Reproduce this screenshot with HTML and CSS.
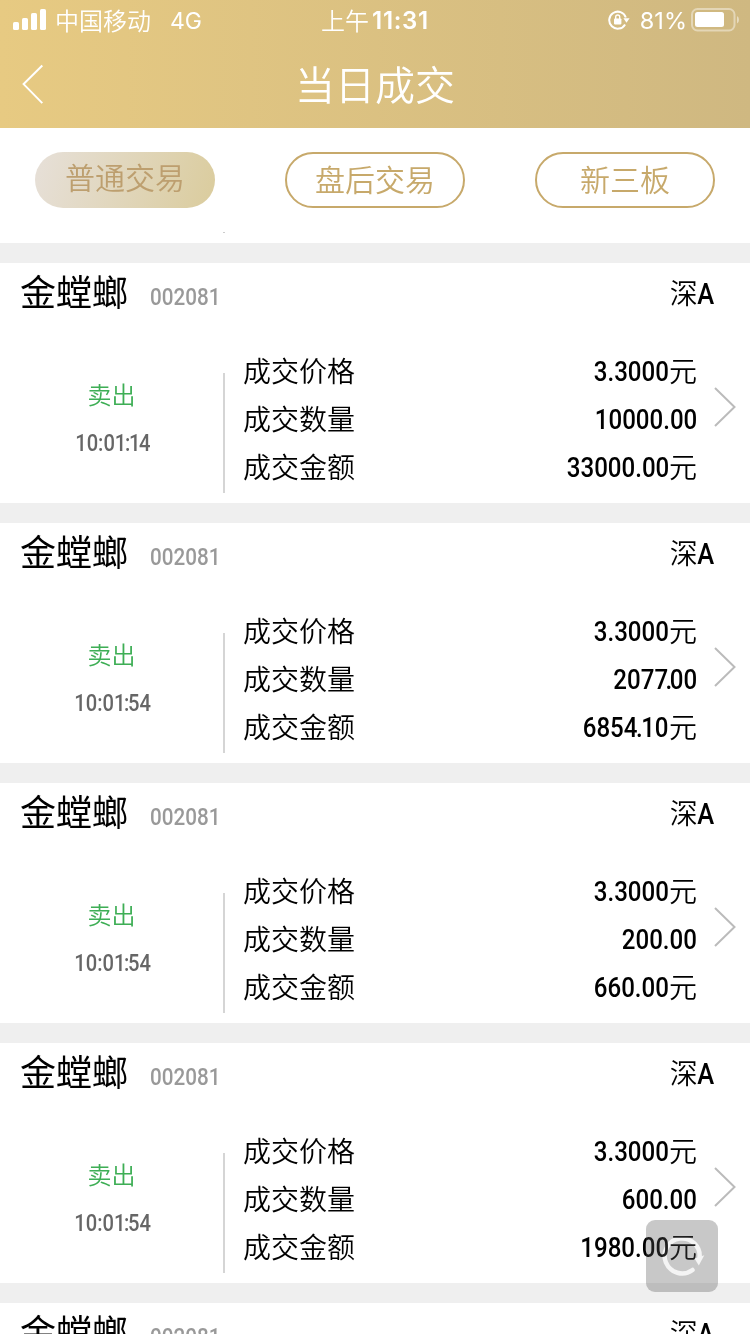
FILE: index.html
```html
<!DOCTYPE html>
<html lang="zh-CN">
<head>
<meta charset="utf-8">
<title>当日成交</title>
<link rel="stylesheet" href="styles.css">
</head>
<body>
<div class="screen">
  <header class="header">
    <div class="status">
      <div class="status-left">
        <svg class="signal" width="34" height="21" viewBox="0 0 34 21" fill="#fff"><rect x="0" y="13" width="6" height="8" rx="1.6"/><rect x="9" y="9" width="6" height="12" rx="1.6"/><rect x="18" y="4" width="6" height="17" rx="1.6"/><rect x="27" y="0" width="6" height="21" rx="1.6"/></svg>
        <span class="carrier">中国移动</span><span class="network">4G</span>
      </div>
      <div class="clock"><span class="ampm">上午</span><span class="time">11:31</span></div>
      <div class="status-right">
        <svg class="lock" width="22" height="20" viewBox="0 0 22 20"><path d="M17.1 14.4A8.5 8.5 0 1 1 17.8 7.5" fill="none" stroke="#fff" stroke-width="2"/><path d="M15.400 8.200h6.200l-3.100 4.600z" fill="#fff"/><rect x="6" y="8.400" width="7.400" height="6" rx=".8" fill="#fff"/><path d="M7.700 9V7a2 2 0 0 1 4 0v2" fill="none" stroke="#fff" stroke-width="1.4"/></svg>
        <span class="percent">81%</span>
        <svg class="battery" width="49" height="24" viewBox="0 0 49 24"><rect x="1" y="1" width="42.5" height="21.5" rx="5.5" fill="none" stroke="#fff" stroke-opacity=".42" stroke-width="2"/><rect x="4" y="4" width="29" height="15" rx="2.5" fill="#fff"/><path d="M46 8q2 1 2 3.800t-2 3.800z" fill="#fff" fill-opacity=".5"/></svg>
      </div>
    </div>
    <div class="navbar">
      <svg class="back" width="22" height="40" viewBox="0 0 22 40"><path d="M20.300 1.500L1.600 20.100l18.700 19" fill="none" stroke="#fff" stroke-width="2"/></svg>
      <h1 class="title">当日成交</h1>
    </div>
  </header>
  <nav class="tabs">
    <span class="tab active">普通交易</span>
    <span class="tab">盘后交易</span>
    <span class="tab">新三板</span>
    <i class="speck"></i>
  </nav>
  <main class="list">
    <section class="card">
      <div class="card-head"><span class="name">金螳螂</span><span class="code">002081</span><span class="market">深<b>A</b></span></div>
      <div class="card-body">
        <div class="side"><span class="action">卖出</span><span class="stamp">10:0<i class="tight">1:1</i>4</span></div>
        <div class="rows">
          <div class="row"><span>成交价格</span><span class="value"><b>3.3000</b>元</span></div>
          <div class="row"><span>成交数量</span><span class="value"><b>10000.00</b></span></div>
          <div class="row"><span>成交金额</span><span class="value"><b>33000.00</b>元</span></div>
        </div>
        <svg class="more" width="22" height="40" viewBox="0 0 22 40"><path d="M1 1l19.500 19L1 39" fill="none" stroke="#bbb" stroke-width="2"/></svg>
      </div>
    </section>
    <section class="card">
      <div class="card-head"><span class="name">金螳螂</span><span class="code">002081</span><span class="market">深<b>A</b></span></div>
      <div class="card-body">
        <div class="side"><span class="action">卖出</span><span class="stamp">10:0<i class="tight">1:</i>54</span></div>
        <div class="rows">
          <div class="row"><span>成交价格</span><span class="value"><b>3.3000</b>元</span></div>
          <div class="row"><span>成交数量</span><span class="value"><b>207<i class="kern">7.</i>00</b></span></div>
          <div class="row"><span>成交金额</span><span class="value"><b>685<i class="kern-s">4.</i>10</b>元</span></div>
        </div>
        <svg class="more" width="22" height="40" viewBox="0 0 22 40"><path d="M1 1l19.500 19L1 39" fill="none" stroke="#bbb" stroke-width="2"/></svg>
      </div>
    </section>
    <section class="card">
      <div class="card-head"><span class="name">金螳螂</span><span class="code">002081</span><span class="market">深<b>A</b></span></div>
      <div class="card-body">
        <div class="side"><span class="action">卖出</span><span class="stamp">10:0<i class="tight">1:</i>54</span></div>
        <div class="rows">
          <div class="row"><span>成交价格</span><span class="value"><b>3.3000</b>元</span></div>
          <div class="row"><span>成交数量</span><span class="value"><b>200.00</b></span></div>
          <div class="row"><span>成交金额</span><span class="value"><b>660.00</b>元</span></div>
        </div>
        <svg class="more" width="22" height="40" viewBox="0 0 22 40"><path d="M1 1l19.500 19L1 39" fill="none" stroke="#bbb" stroke-width="2"/></svg>
      </div>
    </section>
    <section class="card">
      <div class="card-head"><span class="name">金螳螂</span><span class="code">002081</span><span class="market">深<b>A</b></span></div>
      <div class="card-body">
        <div class="side"><span class="action">卖出</span><span class="stamp">10:0<i class="tight">1:</i>54</span></div>
        <div class="rows">
          <div class="row"><span>成交价格</span><span class="value"><b>3.3000</b>元</span></div>
          <div class="row"><span>成交数量</span><span class="value"><b>600.00</b></span></div>
          <div class="row"><span>成交金额</span><span class="value"><b>1980.00</b>元</span></div>
        </div>
        <svg class="more" width="22" height="40" viewBox="0 0 22 40"><path d="M1 1l19.500 19L1 39" fill="none" stroke="#bbb" stroke-width="2"/></svg>
      </div>
    </section>
    <section class="card">
      <div class="card-head"><span class="name">金螳螂</span><span class="code">002081</span><span class="market">深<b>A</b></span></div>
    </section>
  </main>
  <div class="refresh">
    <svg width="72" height="72" viewBox="0 0 72 72"><path d="M53.500 38A17.500 17.500 0 1 0 46.500 50" fill="none" stroke="#2e2e2e" stroke-width="4.500" stroke-linecap="round"/><path d="M48.500 38.500l9.800-3.200-5.500 10.200z" fill="#2e2e2e"/></svg>
  </div>
</div>
</body>
</html>
```

FILE: styles.css
```css
* { box-sizing: border-box; }
body {
  margin: 0;
  font-family: "Noto Sans CJK SC", sans-serif;
  background: #efefef;
  color: #000;
}
.screen {
  position: relative;
  width: 750px;
  height: 1334px;
  overflow: hidden;
}
.header {
  height: 128px;
  background: linear-gradient(90deg, #e7ca82, #cfb881);
  color: #fff;
}
.status {
  display: grid;
  grid-template-columns: 1fr auto 1fr;
  height: 40px;
  align-items: center;
  font-size: 24px;
  font-weight: 350;
  line-height: 38px;
}
.status-left { display: flex; align-items: center; padding-left: 13px; }
.signal { margin-top: -2px; }
.carrier { margin-left: 8px; }
.network { margin-left: 19px; padding-top: 2px; font-family: Inter, sans-serif; font-weight: 400; font-size: 23px; }
.clock { display: flex; gap: 3px; }
.time { padding-top: 1px; font-family: Inter, sans-serif; font-weight: 600; font-size: 24px; letter-spacing: .7px; }
.status-right { display: flex; align-items: center; justify-content: flex-end; padding-right: 10px; }
.percent { margin: 0 4px 0 10px; padding-top: 2px; font-family: Inter, sans-serif; font-weight: 400; font-size: 23.5px; }
.battery { margin-top: -1px; }
.navbar {
  display: grid;
  grid-template-columns: 100px 1fr 100px;
  height: 88px;
  align-items: center;
}
.back { margin-left: 22px; }
.title { margin: 0; text-align: center; font-size: 40px; font-weight: 350; line-height: 86px; height: 88px; }

.tabs {
  position: relative;
  display: flex;
  justify-content: space-between;
  height: 115px;
  padding: 24px 35px;
  background: #fff;
}
.tab {
  width: 180px;
  height: 56px;
  border: 2px solid #c7a96b;
  border-radius: 28px;
  color: #c7a96b;
  font-size: 30px;
  font-weight: 350;
  line-height: 49px;
  text-align: center;
}
.tab.active {
  border: 0;
  background: linear-gradient(107deg, #e6dfd6 5%, #dbcda0 95%);
  color: #bd9f6f;
}
.speck { position: absolute; left: 223px; top: 104px; width: 2px; height: 1px; background: #ccc; }

.list { display: flex; flex-direction: column; gap: 20px; padding-top: 20px; }
.card { height: 240px; flex: none; background: #fff; }
.card-head { display: flex; height: 84px; padding: 0 36px 0 20px; }
.name { font-size: 36px; line-height: 55px; }
.code {
  margin-left: 22px;
  font-family: Roboto, sans-serif;
  font-size: 24px;
  font-weight: 500;
  line-height: 68px;
  color: #999;
  transform: scaleX(.86);
  transform-origin: left;
}
.market { margin-left: auto; font-size: 28px; font-weight: 350; line-height: 59px; }
.market b { display: inline-block; font-family: Roboto, sans-serif; font-size: 29px; font-weight: 500; line-height: 44px; transform: scaleX(.88); transform-origin: right; margin-left: -3px; }
.card-body { display: flex; height: 156px; }
.side {
  width: 225px;
  height: 120px;
  margin-top: 26px;
  border-right: 2px solid #d5d5d5;
  display: flex;
  flex-direction: column;
  align-items: center;
}
.action { height: 48px; line-height: 41px; font-size: 24px; font-weight: 350; color: #3eae55; }
.stamp { font-family: Roboto, sans-serif; font-size: 24px; font-weight: 500; line-height: 44px; color: #666; transform: translateX(1px) scaleX(.84); }
.tight { font-style: normal; letter-spacing: -1.6px; }
.rows { width: 472px; padding-left: 18px; }
.row { display: flex; justify-content: space-between; height: 48px; line-height: 46px; font-size: 28px; font-weight: 350; }
.value b {
  display: inline-block;
  font-family: Roboto, sans-serif;
  font-size: 28.5px;
  line-height: 44px;
  font-weight: 500;
  transform: translateY(-1px) scaleX(.845);
  transform-origin: right;
}
.kern, .kern-s { font-style: normal; }
.kern { letter-spacing: -3px; }
.kern-s { letter-spacing: -1.8px; }
.more { margin: 40px 0 0 17px; }

.refresh {
  position: absolute;
  left: 646px;
  top: 1220px;
  width: 72px;
  height: 72px;
  border-radius: 9px;
  background: rgba(86, 86, 86, .325);
}
.refresh svg { display: block; mix-blend-mode: color-dodge; }
```
